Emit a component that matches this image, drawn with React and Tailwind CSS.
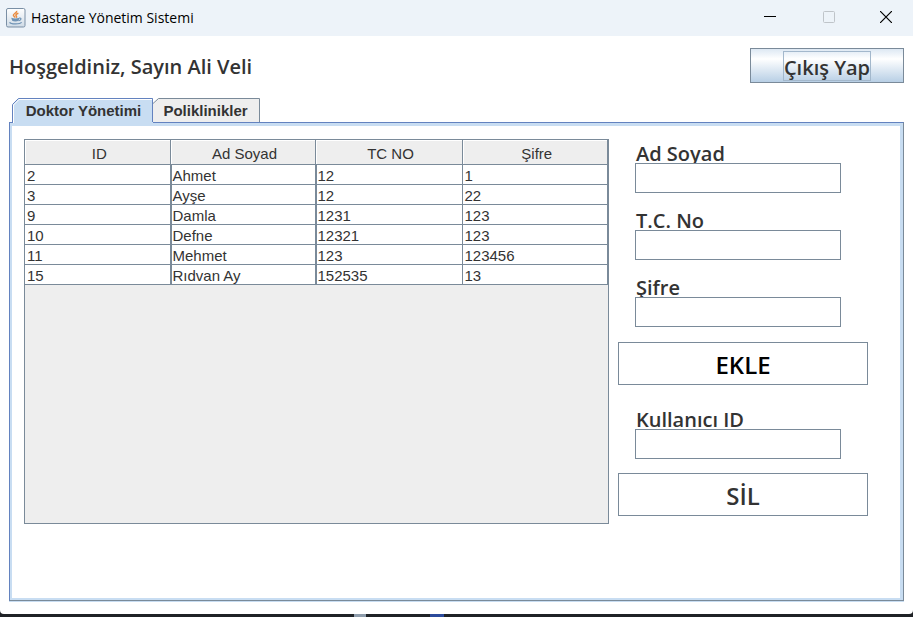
const doctors = [
  { id: "2", name: "Ahmet", tc: "12", password: "1" },
  { id: "3", name: "Ayşe", tc: "12", password: "22" },
  { id: "9", name: "Damla", tc: "1231", password: "123" },
  { id: "10", name: "Defne", tc: "12321", password: "123" },
  { id: "11", name: "Mehmet", tc: "123", password: "123456" },
  { id: "15", name: "Rıdvan Ay", tc: "152535", password: "13" },
];

const columns = ["ID", "Ad Soyad", "TC NO", "Şifre"];

function JavaIcon() {
  return (
    <svg className="h-5 w-5 shrink-0" viewBox="0 0 20 20" fill="none" aria-hidden="true">
      <defs>
        <linearGradient id="tile" x1="0" y1="0" x2="0" y2="1">
          <stop offset="0" stopColor="#ffffff" />
          <stop offset="1" stopColor="#cfdbe6" />
        </linearGradient>
      </defs>
      <rect x="0.5" y="0.5" width="18.5" height="18.5" rx="1.5" fill="url(#tile)" stroke="#7a8fa5" />
      <path d="M10.600 2.800c1 1.800-3.400 2.800-3.200 4.400.1 1 1.400 1.500 1.600 2.400M12.400 5.200c-2.600.9-3 2-2 3 .5.600.2 1-.2 1.400" stroke="#ea8a3c" strokeWidth="1.5" />
      <path d="M5.200 9.800c2.600.9 5.400.9 8.200 0l-.8 3c-1.800.8-4.600.8-6.400 0z" fill="#6f93b5" />
      <path d="M13.200 10.200c2.600-.5 2.200 2-.6 2.400M3.600 14.200c1 2.200 10.600 2.200 12 0" stroke="#6f93b5" strokeWidth="1.2" />
    </svg>
  );
}

function TitleBar() {
  return (
    <header className="flex h-9 items-center bg-[#edf3f9] pl-1.5">
      <JavaIcon />
      <h1 className="ml-[5px] flex-1 font-['Open_Sans',sans-serif] text-sm text-black">Hastane Yönetim Sistemi</h1>
      <button type="button" aria-label="Küçült" className="flex h-9 w-[58px] items-center justify-center pb-0.5">
        <svg className="h-3 w-3" viewBox="0 0 12 12" stroke="#000" aria-hidden="true">
          <path d="M0 5.500h12" />
        </svg>
      </button>
      <button type="button" aria-label="Ekranı kapla" disabled className="flex h-9 w-[60px] items-center justify-center pb-0.5">
        <svg className="h-3 w-3" viewBox="0 0 12 12" fill="none" stroke="#bfc4c9" aria-hidden="true">
          <rect x="0.5" y="0.5" width="11" height="11" rx="1" />
        </svg>
      </button>
      <button type="button" aria-label="Kapat" className="flex h-9 w-[54px] items-center justify-center pb-0.5">
        <svg className="h-3 w-3" viewBox="0 0 12 12" stroke="#000" strokeWidth="1.2" aria-hidden="true">
          <path d="M0 0l12 12M12 0L0 12" />
        </svg>
      </button>
    </header>
  );
}

function Field({ id, label, type = "text" }) {
  return (
    <div className="mx-[17px] flex flex-col">
      <label htmlFor={id} className="h-6 pl-px text-xl leading-[30px] font-semibold">
        {label}
      </label>
      <input id={id} type={type} className="h-[30px] w-[206px] border border-[#7a8a99] bg-white px-1 text-base outline-none" />
    </div>
  );
}

function ActionButton({ children, className }) {
  return (
    <button type="button" className={`h-[43px] w-full border border-[#7a8a99] bg-white pt-0.5 text-2xl font-semibold ${className}`}>
      {children}
    </button>
  );
}

function DoctorTable() {
  return (
    <div className="h-[385px] flex-1 border border-[#7a8a99] bg-[#eeeeee] font-['Liberation_Sans',Arial,sans-serif] text-[15px]">
      <table className="w-full table-fixed border-separate border-spacing-0">
        <colgroup>
          <col />
          <col className="w-[145px]" />
          <col className="w-[147px]" />
          <col />
        </colgroup>
        <thead>
          <tr>
            {columns.map((column) => (
              <th
                key={column}
                scope="col"
                className="h-[25px] border-r border-b border-[#7a8a99] p-0 pt-1 pl-1 leading-5 font-normal shadow-[inset_1px_1px_0_#ffffff]"
              >
                {column}
              </th>
            ))}
          </tr>
        </thead>
        <tbody>
          {doctors.map((doctor) => (
            <tr key={doctor.id} className="bg-white">
              {[doctor.id, doctor.name, doctor.tc, doctor.password].map((value, index) => (
                <td
                  key={columns[index]}
                  className={`h-5 border-r border-b border-[#7a8a99] p-0 pt-0.5 leading-[17px] ${
                    index === 1 || index === 2 ? "border-l pl-px" : "pl-0.5"
                  }`}
                >
                  {value}
                </td>
              ))}
            </tr>
          ))}
        </tbody>
      </table>
    </div>
  );
}

function Tabs() {
  return (
    <div role="tablist" className="flex h-6 pl-[3px] font-['Liberation_Sans',Arial,sans-serif] text-[15px] font-bold">
      <button type="button" role="tab" aria-selected="true" className="relative z-10 -mb-1 h-7 w-[141px] pb-0.5 pl-0.5">
        <svg className="absolute inset-0 h-full w-full" viewBox="0 0 141 28" aria-hidden="true">
          <path d="M1 28V5.500L6.500 0H141v28z" fill="#c8ddf2" />
          <path d="M0.500 24V6.500L6.500 0.500H140.500V24" fill="none" stroke="#6382bf" />
          <path d="M1.500 25V7L7 1.500H140" fill="none" stroke="#ffffff" />
        </svg>
        <span className="relative">Doktor Yönetimi</span>
      </button>
      <button type="button" role="tab" aria-selected="false" className="relative h-6 w-[107px] pt-0.5 pr-0.5">
        <svg className="absolute inset-0 h-full w-full" viewBox="0 0 107 24" aria-hidden="true">
          <path d="M0 24V6L6 0H107v24z" fill="#eeeeee" />
          <path d="M0 5.500L5.500 0.500H106.500V24" fill="none" stroke="#7a8a99" />
        </svg>
        <span className="relative">Poliklinikler</span>
      </button>
    </div>
  );
}

export default function App() {
  return (
    <div className="flex min-h-screen flex-col bg-[#1f2226] font-['Open_Sans',sans-serif] text-[#333333]">
      <div className="flex flex-1 flex-col overflow-hidden rounded-b bg-white">
        <TitleBar />
        <main className="flex flex-1 flex-col px-[9px] pt-3 pb-[13px]">
          <div className="flex items-center justify-between">
            <h2 className="pt-0.5 text-xl font-semibold">Hoşgeldiniz, Sayın Ali Veli</h2>
            <button
              type="button"
              className="flex h-[35px] w-[154px] items-center justify-center border border-[#7a8a99] bg-linear-to-b from-[#dde8f3] via-white via-30% to-[#b8cfe5] text-xl font-semibold"
            >
              <span className="flex h-[30px] items-center border border-[#a3b8cc] pt-1">Çıkış Yap</span>
            </button>
          </div>
          <div className="mt-[15px] flex flex-1 flex-col">
            <Tabs />
            <section className="flex flex-1 border border-[#7a8a99] border-t-[#6382bf] border-l-[#6382bf] shadow-[0_1px_0_#c8ddf2]">
              <div className="flex flex-1 items-start gap-[9px] border-2 border-t-3 border-r-3 border-[#c8ddf2] pt-[13px] pr-8 pl-3">
                <DoctorTable />
                <form className="flex w-[250px] flex-col gap-5" onSubmit={(event) => event.preventDefault()}>
                  <div className="flex flex-col gap-[15px]">
                    <div className="flex flex-col gap-[13px]">
                      <Field id="name" label="Ad Soyad" />
                      <Field id="tc" label="T.C. No" />
                      <Field id="password" label="Şifre" type="password" />
                    </div>
                    <ActionButton className="text-black">EKLE</ActionButton>
                  </div>
                  <div className="flex flex-col gap-[14px]">
                    <Field id="user-id" label="Kullanıcı ID" />
                    <ActionButton className="">SİL</ActionButton>
                  </div>
                </form>
              </div>
            </section>
          </div>
        </main>
      </div>
      <footer className="flex h-[3px] gap-16 pl-[354px]">
        <span className="h-full w-3 bg-[#8d9cab]" />
        <span className="h-full w-[14px] bg-[#2b4a9b]" />
      </footer>
    </div>
  );
}
